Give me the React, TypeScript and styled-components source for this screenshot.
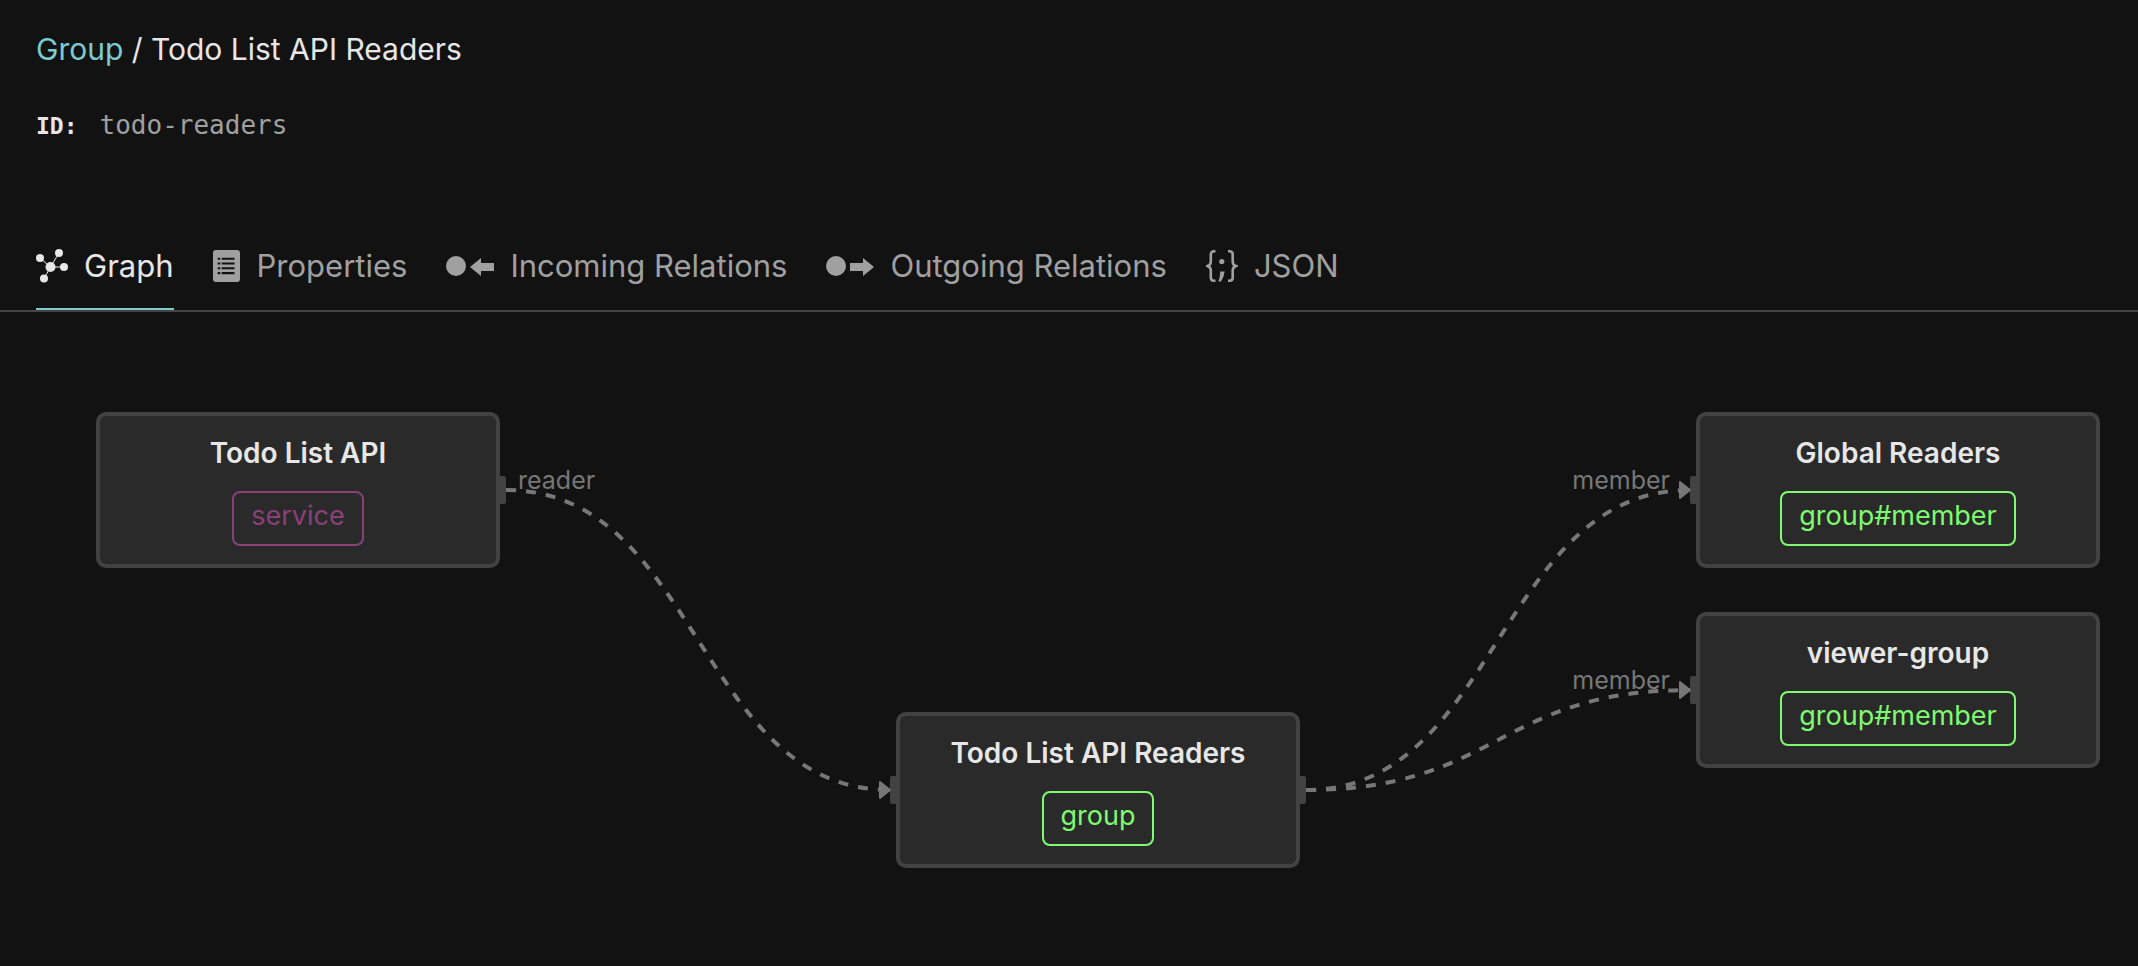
import React from "react";
import styled, { createGlobalStyle } from "styled-components";

const GlobalStyle = createGlobalStyle`
  * { box-sizing: border-box; }
  body {
    margin: 0;
    background: #121212;
    color: #e7e7e7;
    font-family: Inter, "Liberation Sans", sans-serif;
  }
`;

const Page = styled.main`
  display: flex;
  flex-direction: column;
  min-height: 100vh;
`;

const Header = styled.header`
  display: flex;
  flex-direction: column;
  gap: 36px;
  padding: 29px 36px 27px;
`;

const Title = styled.h1`
  margin: 0;
  font-size: 30px;
  line-height: 40px;
  font-weight: 400;
`;

const TitleLink = styled.a`
  color: #7ccbcf;
  text-decoration: none;
`;

const IdLine = styled.dl`
  display: flex;
  align-items: baseline;
  gap: 22px;
  height: 40px;
  margin: 0;
  line-height: 40px;
  font-family: "DejaVu Sans Mono", monospace;
`;

const IdLabel = styled.dt`
  font-size: 23px;
  font-weight: 700;
`;

const IdValue = styled.dd`
  margin: 0;
  color: #a0a0a0;
  font-size: 26px;
`;

const Tabs = styled.nav`
  display: flex;
  gap: 39px;
  margin-top: 48px;
  padding: 0 36px;
  border-bottom: 2px solid #444444;
`;

const Tab = styled.button<{ $active?: boolean }>`
  display: flex;
  align-items: center;
  gap: 16px;
  padding: 24px 0 20px;
  border: 0;
  border-bottom: 2px solid ${(p) => (p.$active ? "#7ccbcf" : "transparent")};
  background: none;
  color: ${(p) => (p.$active ? "#e7e7e7" : "#a0a0a0")};
  font: inherit;
  font-size: 31px;
  line-height: 44px;
  white-space: nowrap;
  cursor: pointer;
`;

const Canvas = styled.section`
  position: relative;
  flex: 1;
  min-height: 600px;
  overflow: hidden;
`;

const Edges = styled.svg`
  position: absolute;
  top: 0;
  left: 0;
  width: 100%;
  height: 100%;
  overflow: visible;
  pointer-events: none;
`;

const EdgeLabel = styled.text`
  fill: #777777;
  font-size: 25px;
`;

const NodeCard = styled.article<{ $x: number; $y: number }>`
  position: absolute;
  left: ${(p) => p.$x}px;
  top: ${(p) => p.$y}px;
  display: flex;
  flex-direction: column;
  align-items: center;
  gap: 19px;
  width: 404px;
  height: 156px;
  padding: 18px;
  border: 4px solid #424242;
  border-radius: 10px;
  background: #2a2a2a;
`;

const NodeTitle = styled.h2`
  margin: 0;
  font-size: 28px;
  line-height: 38px;
  font-weight: 600;
`;

const Badge = styled.span<{ $color: string }>`
  padding: 0 17px 5px;
  border: 2px solid ${(p) => p.$color};
  border-radius: 8px;
  color: ${(p) => p.$color};
  font-size: 27px;
  line-height: 46px;
`;

const Port = styled.i<{ $side: "left" | "right" }>`
  position: absolute;
  top: 60px;
  ${(p) => p.$side}: -10px;
  width: 6px;
  height: 28px;
  border-radius: ${(p) => (p.$side === "left" ? "2px 0 0 2px" : "0 2px 2px 0")};
  background: #424242;
`;

const GraphIcon = () => (
  <svg width="32" height="36" viewBox="0 0 32 36" fill="currentColor" aria-hidden="true">
    <path d="M14.5 19 4 10M14.5 19 23 5M14.5 19H28M14.5 19 8 30.5" stroke="currentColor" strokeWidth="1" />
    <circle cx="4" cy="10" r="4" />
    <circle cx="23" cy="5" r="4" />
    <circle cx="14.5" cy="19" r="5" />
    <circle cx="28" cy="19" r="4" />
    <circle cx="8" cy="30.5" r="4" />
  </svg>
);

const PropertiesIcon = () => (
  <svg width="28" height="32" viewBox="0 0 28 32" aria-hidden="true">
    <rect width="27" height="32" rx="3" fill="currentColor" />
    <path d="M4.700 8.700h2.600M8.700 8.700h12.800M4.700 13.500h2.600M8.700 13.500h12.800M4.700 18.300h2.600M8.700 18.300h12.800M4.700 23.100h2.600M8.700 23.100h12.800" stroke="#121212" strokeWidth="2.100" />
  </svg>
);

const IncomingIcon = () => (
  <svg width="48" height="20" viewBox="0 0 48 20" fill="currentColor" aria-hidden="true">
    <circle cx="10" cy="10" r="10" />
    <path d="M24 11 35 2v5h13v8H35v5Z" />
  </svg>
);

const OutgoingIcon = () => (
  <svg width="48" height="20" viewBox="0 0 48 20" fill="currentColor" aria-hidden="true">
    <circle cx="10" cy="10" r="10" />
    <path d="M48 11 37 2v5H24v8h13v5Z" />
  </svg>
);

const JsonIcon = () => (
  <svg width="32" height="34" viewBox="0 0 32 34" fill="none" stroke="currentColor" strokeWidth="2.600" aria-hidden="true">
    <path d="M9.500 2.300H8Q4.800 2.300 4.800 5.500v7Q4.800 16 1.500 17q3.300 1 3.300 4.500v7q0 3.200 3.200 3.200h1.500M22 2.300h1.500q3.200 0 3.200 3.200v7q0 3.500 3.300 4.500-3.300 1-3.300 4.500v7q0 3.200-3.200 3.200H22" />
    <circle cx="15.800" cy="12.500" r="2.600" fill="currentColor" stroke="none" />
    <path d="M14.200 22.500h4.400q-.6 5.500-3.600 10h-2.500q1.700-5 1.700-10Z" fill="currentColor" stroke="none" />
  </svg>
);

const tabs = [
  { label: "Graph", Icon: GraphIcon, active: true },
  { label: "Properties", Icon: PropertiesIcon },
  { label: "Incoming Relations", Icon: IncomingIcon },
  { label: "Outgoing Relations", Icon: OutgoingIcon },
  { label: "JSON", Icon: JsonIcon },
];

const PURPLE = "#8a4078";
const GREEN = "#7efb6f";

type Side = "left" | "right";
const nodes: { title: string; type: string; color: string; x: number; y: number; ports: Side[] }[] = [
  { title: "Todo List API", type: "service", color: PURPLE, x: 96, y: 100, ports: ["right"] },
  { title: "Todo List API Readers", type: "group", color: GREEN, x: 896, y: 400, ports: ["left", "right"] },
  { title: "Global Readers", type: "group#member", color: GREEN, x: 1696, y: 100, ports: ["left"] },
  { title: "viewer-group", type: "group#member", color: GREEN, x: 1696, y: 300, ports: ["left"] },
];

const edges = [
  { from: [506, 178], to: [890, 478] },
  { from: [1306, 478], to: [1690, 178] },
  { from: [1306, 478], to: [1690, 378] },
];

const curve = ([x1, y1]: number[], [x2, y2]: number[]) => {
  const mid = (x1 + x2) / 2;
  return `M${x1},${y1} C${mid},${y1} ${mid},${y2} ${x2},${y2}`;
};

export default function App() {
  return (
    <>
      <GlobalStyle />
      <Page>
        <Header>
          <Title>
            <TitleLink href="#group">Group</TitleLink> / Todo List API Readers
          </Title>
          <IdLine>
            <IdLabel>ID:</IdLabel>
            <IdValue>todo-readers</IdValue>
          </IdLine>
        </Header>
        <Tabs>
          {tabs.map(({ label, Icon, active }) => (
            <Tab key={label} type="button" $active={active}>
              <Icon />
              {label}
            </Tab>
          ))}
        </Tabs>
        <Canvas>
          {nodes.map((n) => (
            <NodeCard key={n.title} $x={n.x} $y={n.y}>
              <NodeTitle>{n.title}</NodeTitle>
              <Badge $color={n.color}>{n.type}</Badge>
              {n.ports.map((side) => (
                <Port key={side} $side={side} />
              ))}
            </NodeCard>
          ))}
          <Edges>
            <defs>
              <marker id="arrow" markerUnits="userSpaceOnUse" markerWidth="14" markerHeight="20" refX="11" refY="10" orient="auto">
                <path d="M1 2 11 10 1 18Z" fill="#777777" stroke="#777777" strokeWidth="2" strokeLinejoin="round" />
              </marker>
            </defs>
            {edges.map((e, i) => (
              <path key={i} d={curve(e.from, e.to)} fill="none" stroke="#777777" strokeWidth="4" strokeDasharray="10" markerEnd="url(#arrow)" />
            ))}
            <EdgeLabel x="518" y="177">reader</EdgeLabel>
            <EdgeLabel x="1670" y="177" textAnchor="end">member</EdgeLabel>
            <EdgeLabel x="1670" y="377" textAnchor="end">member</EdgeLabel>
          </Edges>
        </Canvas>
      </Page>
    </>
  );
}
